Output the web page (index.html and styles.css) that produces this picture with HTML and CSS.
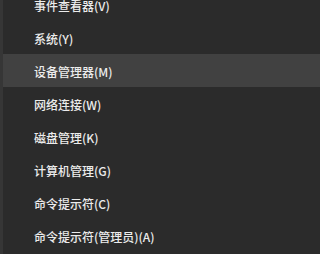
FILE: index.html
```html
<!DOCTYPE html>
<html lang="zh-CN">
<head>
<meta charset="utf-8">
<link rel="stylesheet" href="styles.css">
</head>
<body>
<div class="menu">
  <div class="item">事件查看器(V)</div>
  <div class="item">系统(Y)</div>
  <div class="item active">设备管理器(M)</div>
  <div class="item">网络连接(W)</div>
  <div class="item">磁盘管理(K)</div>
  <div class="item">计算机管理(G)</div>
  <div class="item">命令提示符(C)</div>
  <div class="item">命令提示符(管理员)(A)</div>
</div>
</body>
</html>
```
FILE: styles.css
```css
html, body {
  margin: 0;
  padding: 0;
  background: #2b2b2b;
  height: 100%;
  overflow: hidden;
}
.menu {
  margin-top: -12px;
  border-left: 3px solid #363636;
  min-height: calc(100vh + 12px);
  box-sizing: border-box;
  display: flex;
  flex-direction: column;
  font-family: "Noto Sans CJK SC", "Noto Sans", sans-serif;
  font-size: 12px;
  font-weight: 500;
  color: #ececec;
}
.item {
  height: 33px;
  flex: none;
  display: flex;
  align-items: center;
  padding-left: 31px;
  padding-top: 2px;
  white-space: nowrap;
  box-sizing: border-box;
}
.item.active {
  background: #414141;
}
```
